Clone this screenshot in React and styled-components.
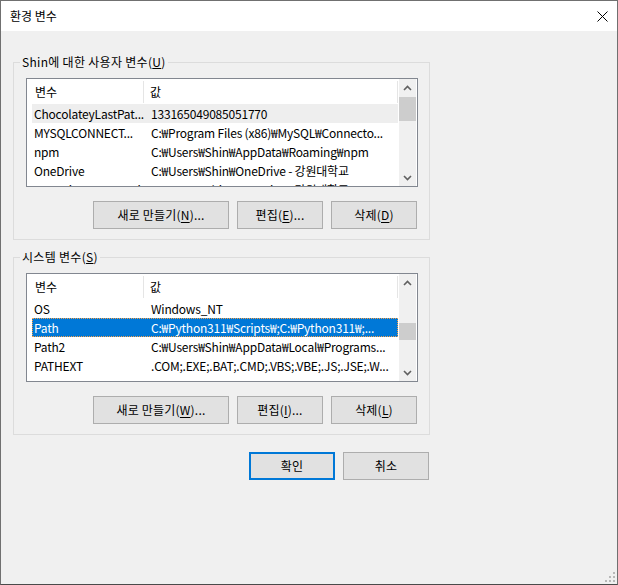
import React from "react";
import styled, { createGlobalStyle } from "styled-components";

const GlobalStyle = createGlobalStyle`
  html, body {
    margin: 0;
    padding: 0;
    background: #f0f0f0;
  }
`;

const Window = styled.div`
  position: relative;
  width: 618px;
  height: 585px;
  box-sizing: border-box;
  border: 1px solid #707070;
  border-bottom-color: #4a4a4a;
  background: #f0f0f0;
  display: flex;
  flex-direction: column;
  font-family: "Noto Sans CJK KR", "Noto Sans", sans-serif;
  font-size: 12px;
  color: #000;
`;

const TitleBar = styled.div`
  height: 30px;
  flex-shrink: 0;
  background: #fff;
  display: flex;
  align-items: center;
  justify-content: space-between;
  padding: 0 9px;
`;

const Title = styled.span`
  line-height: 16px;
  margin-top: -1px;
`;

const Body = styled.div`
  padding: 23px 0 0 12px;
  display: flex;
  flex-direction: column;
`;

const Group = styled.fieldset`
  width: 417px;
  box-sizing: border-box;
  margin: ${p => p.$gap || 0}px 0 0 0;
  padding: 8px 11px 10px 12px;
  border: 1px solid #dcdcdc;
  min-inline-size: 0;
`;

const Legend = styled.legend`
  margin-left: -6px;
  padding: 0 2px;
  line-height: 16px;
  letter-spacing: 0.3px;
`;

const List = styled.div`
  width: 392px;
  height: 109px;
  box-sizing: border-box;
  border: 1px solid #828790;
  background: #fff;
  display: flex;
  overflow: hidden;
`;

const ListContent = styled.div`
  flex: 1;
  min-width: 0;
  display: flex;
  flex-direction: column;
  overflow: hidden;
`;

const Header = styled.div`
  height: 25px;
  flex-shrink: 0;
  display: flex;
  align-items: center;
`;

const HeaderCell = styled.div`
  height: 22px;
  display: flex;
  align-items: center;
  box-sizing: border-box;
  border-right: 1px solid #e5e5e5;
  padding-left: ${p => p.$pad}px;
  width: ${p => (p.$width ? `${p.$width}px` : "auto")};
  flex: ${p => (p.$width ? "none" : 1)};
  margin-right: ${p => (p.$width ? 0 : 1)}px;
`;

const Row = styled.div`
  height: 19px;
  flex-shrink: 0;
  margin: 0 1px 0 5px;
  box-sizing: border-box;
  display: flex;
  align-items: center;
  white-space: nowrap;
  letter-spacing: -0.2px;
  background: ${p => (p.$selected ? "#0078d7" : p.$hover ? "#eeeeee" : "transparent")};
  color: ${p => (p.$selected ? "#fff" : "#000")};
  border: 1px ${p => (p.$selected ? "dotted #f5a04a" : "solid transparent")};
`;

const NameCell = styled.div`
  width: 111px;
  flex-shrink: 0;
  padding-left: 1px;
  overflow: hidden;
`;

const ValueCell = styled.div`
  flex: 1;
  padding-left: 6px;
  overflow: hidden;
`;

const ScrollBar = styled.div`
  width: 17px;
  margin-right: 1px;
  background: #f0f0f0;
  display: flex;
  flex-direction: column;
`;

const ScrollArrow = styled.div`
  height: 17px;
  flex-shrink: 0;
  display: flex;
  align-items: center;
  justify-content: center;
`;

const ScrollTrack = styled.div`
  flex: 1;
  display: flex;
  flex-direction: column;
`;

const Thumb = styled.div`
  margin-top: ${p => p.$top}px;
  height: ${p => p.$size}px;
  background: #cdcdcd;
`;

const ButtonRow = styled.div`
  margin-top: 14px;
  width: 392px;
  display: flex;
  justify-content: flex-end;
  gap: 8px;
  padding-right: 1px;
  box-sizing: border-box;
`;

const Button = styled.button`
  width: ${p => p.$width || 86}px;
  height: 28px;
  box-sizing: border-box;
  padding: 0;
  margin: 0;
  background: #e1e1e1;
  border: ${p => (p.$default ? "2px solid #0078d7" : "1px solid #adadad")};
  border-radius: 0;
  font-family: inherit;
  font-size: 12px;
  color: #000;
  line-height: 16px;
  letter-spacing: 0.2px;

  u {
    text-decoration: underline;
    text-underline-offset: 2px;
  }
`;

const Footer = styled.div`
  width: 417px;
  margin-top: 17px;
  padding-right: 1px;
  box-sizing: border-box;
  display: flex;
  justify-content: flex-end;
  gap: 8px;
`;

const Grip = styled.svg`
  position: absolute;
  right: 1px;
  bottom: 1px;
`;

const userVars = [
  ["ChocolateyLastPat...", "133165049085051770"],
  ["MYSQLCONNECT...", "C:₩Program Files (x86)₩MySQL₩Connecto..."],
  ["npm", "C:₩Users₩Shin₩AppData₩Roaming₩npm"],
  ["OneDrive", "C:₩Users₩Shin₩OneDrive - 강원대학교"],
  ["OneDriveCommercial", "C:₩Users₩Shin₩OneDrive - 강원대학교"],
];

const systemVars = [
  ["OS", "Windows_NT"],
  ["Path", "C:₩Python311₩Scripts₩;C:₩Python311₩;..."],
  ["Path2", "C:₩Users₩Shin₩AppData₩Local₩Programs..."],
  ["PATHEXT", ".COM;.EXE;.BAT;.CMD;.VBS;.VBE;.JS;.JSE;.W..."],
];

const Chevron = ({ down }) => (
  <svg width="9" height="6" viewBox="0 0 9 6">
    <polyline
      points={down ? "1,1 4.5,4.5 8,1" : "1,5 4.5,1.5 8,5"}
      fill="none"
      stroke="#606060"
      strokeWidth="1.6"
    />
  </svg>
);

const VarList = ({ rows, hover, selected, thumbTop, thumbSize }) => (
  <List>
    <ListContent>
      <Header>
        <HeaderCell $width={117} $pad={8}>변수</HeaderCell>
        <HeaderCell $pad={6}>값</HeaderCell>
      </Header>
      {rows.map(([name, value], i) => (
        <Row key={name} $hover={i === hover} $selected={i === selected}>
          <NameCell>{name}</NameCell>
          <ValueCell>{value}</ValueCell>
        </Row>
      ))}
    </ListContent>
    <ScrollBar>
      <ScrollArrow><Chevron /></ScrollArrow>
      <ScrollTrack>
        <Thumb $top={thumbTop} $size={thumbSize} />
      </ScrollTrack>
      <ScrollArrow><Chevron down /></ScrollArrow>
    </ScrollBar>
  </List>
);

export default function App() {
  return (
    <>
      <GlobalStyle />
      <Window>
        <TitleBar>
          <Title>환경 변수</Title>
          <svg width="11" height="11" viewBox="0 0 11 11">
            <path d="M0.5 0.5 L10.5 10.5 M10.5 0.5 L0.5 10.5" stroke="#000" strokeWidth="1" />
          </svg>
        </TitleBar>
        <Body>
          <Group>
            <Legend>Shin에 대한 사용자 변수(<u>U</u>)</Legend>
            <VarList rows={userVars} hover={0} thumbTop={1} thumbSize={24} />
            <ButtonRow>
              <Button $width={136}>새로 만들기(<u>N</u>)...</Button>
              <Button>편집(<u>E</u>)...</Button>
              <Button>삭제(<u>D</u>)</Button>
            </ButtonRow>
          </Group>
          <Group $gap={9}>
            <Legend>시스템 변수(<u>S</u>)</Legend>
            <VarList rows={systemVars} selected={1} thumbTop={32} thumbSize={17} />
            <ButtonRow>
              <Button $width={136}>새로 만들기(<u>W</u>)...</Button>
              <Button>편집(<u>I</u>)...</Button>
              <Button>삭제(<u>L</u>)</Button>
            </ButtonRow>
          </Group>
          <Footer>
            <Button $default>확인</Button>
            <Button>취소</Button>
          </Footer>
        </Body>
        <Grip width="12" height="12" viewBox="0 0 12 12">
          <g fill="#b8b8b8">
            <rect x="9" y="1" width="2" height="2" />
            <rect x="5" y="5" width="2" height="2" />
            <rect x="9" y="5" width="2" height="2" />
            <rect x="1" y="9" width="2" height="2" />
            <rect x="5" y="9" width="2" height="2" />
            <rect x="9" y="9" width="2" height="2" />
          </g>
        </Grip>
      </Window>
    </>
  );
}
